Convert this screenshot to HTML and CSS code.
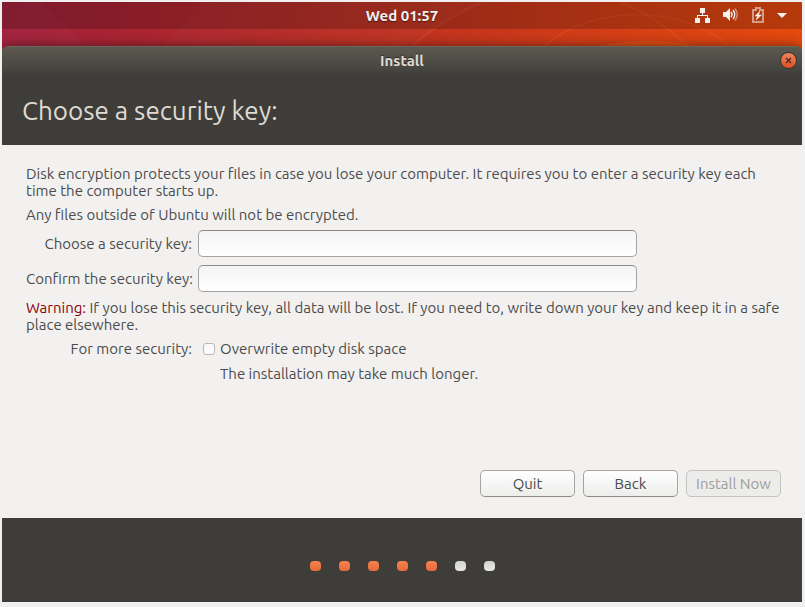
FILE: index.html
```html
<!DOCTYPE html>
<html lang="en">
<head>
    <meta charset="UTF-8">
    <meta name="viewport" content="width=device-width, initial-scale=1.0">
    <title>Install</title>
    <link rel="stylesheet" href="styles.css">
</head>
<body>
<div class="desktop">
    <svg class="wallpaper" viewBox="0 0 800 44" preserveAspectRatio="none" aria-hidden="true">
        <path d="M0 0H40L84 44H0Z" fill="#fff" fill-opacity=".02"/>
        <path d="M200 0L160 44H410Q440 18 480 0Z" fill="#fff" fill-opacity=".02"/>
        <g fill="none" stroke="#ff8040" stroke-opacity=".14" stroke-width="2">
            <path d="M410 44Q440 18 480 0"/>
            <path d="M543 44C590 2 680 2 727 44"/>
            <path d="M618 0Q655 15 686 44"/>
        </g>
        <path d="M596 44Q645 34 695 44Z" fill="#ff8020" fill-opacity=".22"/>
    </svg>

    <header class="top-bar">
        <time class="clock">Wed 01:57</time>
        <div class="indicators">
            <svg width="16" height="16" viewBox="-1 -1 16 16" role="img" aria-label="Network">
                <path d="M5 0h5v5H8v2h5v3h2v5h-5v-5h2V8H3v2h2v5H0v-5h2V7h5V5H5z" fill="#f2f1f0"/>
            </svg>
            <svg width="16" height="16" viewBox="0 0 16 16" role="img" aria-label="Volume">
                <path d="M0 5h3l4-4v13l-4-4H0z" fill="#f2f1f0"/>
                <path d="M8 5q2 2.500 0 5M10 3q3.500 4.500 0 9" fill="none" stroke="#f2f1f0" stroke-width="1.500"/>
                <path d="M12 1.500q4.500 6 0 12" fill="none" stroke="#f2f1f0" stroke-opacity=".45" stroke-width="1.500"/>
            </svg>
            <svg width="12" height="16" viewBox="0 0 12 16" role="img" aria-label="Battery">
                <path d="M4 1h4v2h3v12H1V3h3z" fill="none" stroke="#f2f1f0" stroke-opacity=".55" stroke-width="2"/>
                <path d="M8 4L3 9h2.500L4 13l5.500-5H6.500z" fill="#f2f1f0" stroke="#f2f1f0" stroke-width=".5"/>
            </svg>
            <svg width="10" height="16" viewBox="0 0 10 16" role="img" aria-label="System menu">
                <path d="M0 6h10l-5 5z" fill="#f2f1f0"/>
            </svg>
        </div>
    </header>

    <main class="window">
        <div class="title-bar">
            <span class="title">Install</span>
            <button type="button" class="close" aria-label="Close">
                <svg width="7" height="7" viewBox="0 0 7 7" aria-hidden="true">
                    <path d="M1 1l5 5M6 1L1 6" stroke="#3c2a1c" stroke-width="1.200"/>
                </svg>
            </button>
        </div>
        <h1>Choose a security key:</h1>

        <form class="content">
            <p>Disk encryption protects your files in case you lose your computer. It requires you to enter a security key each time the computer starts up.</p>
            <p>Any files outside of Ubuntu will not be encrypted.</p>
            <div class="fields">
                <label for="key">Choose a security key:</label>
                <input type="password" id="key">
                <label for="confirm">Confirm the security key:</label>
                <input type="password" id="confirm">
            </div>
            <p><span class="warning">Warning:</span> If you lose this security key, all data will be lost. If you need to, write down your key and keep it in a safe place elsewhere.</p>
            <div class="fields">
                <span>For more security:</span>
                <div class="option">
                    <input type="checkbox" id="overwrite" aria-describedby="hint">
                    <label for="overwrite">Overwrite empty disk space</label>
                </div>
                <p class="hint" id="hint">The installation may take much longer.</p>
            </div>
            <div class="actions">
                <button type="button">Quit</button>
                <button type="button">Back</button>
                <button type="submit" disabled>Install Now</button>
            </div>
        </form>

        <footer class="progress">
            <span class="dot done"></span>
            <span class="dot done"></span>
            <span class="dot done"></span>
            <span class="dot done"></span>
            <span class="dot done"></span>
            <span class="dot"></span>
            <span class="dot"></span>
        </footer>
    </main>
</div>
</body>
</html>
```
FILE: styles.css
```css
:root {
    --dark: #3e3d39;
    --light: #f2f1f0;
    --text: #4c4c4c;
    --warning: #900008;
    --border: #a5a4a2;
    --font-family: Ubuntu, 'Noto Sans', 'Open Sans', sans-serif;
}

* {
    box-sizing: border-box;
    margin: 0;
    padding: 0;
}

body {
    font-family: var(--font-family);
    font-size: 15px;
    line-height: 17px;
    color: var(--text);
    background-color: #f0f0f0;
    min-height: 100vh;
    padding: 2px 3px 5px 2px;
    display: flex;
}

.desktop {
    flex: 1;
    display: flex;
    flex-direction: column;
    position: relative;
    overflow: hidden;
    background: linear-gradient(to right, #a1203c, #b42a26 35%, #cc3a1a 67%, #e4490e);
}

.wallpaper {
    position: absolute;
    top: 0;
    left: 0;
    width: 100%;
    height: 44px;
}

.top-bar {
    position: relative;
    display: grid;
    grid-template-columns: 1fr auto 1fr;
    align-items: center;
    height: 27px;
    padding: 0 15px 1px;
    margin-bottom: 17px;
    background-color: rgba(0, 0, 0, 0.2);
    color: #f2f1f0;
}

.clock {
    grid-column: 2;
    font-weight: 700;
    text-shadow: 0 1px 1px rgba(0, 0, 0, 0.5);
}

.indicators {
    display: flex;
    justify-content: flex-end;
    align-items: center;
    gap: 13px;
}

.window {
    position: relative;
    flex: 1;
    display: flex;
    flex-direction: column;
    background-color: var(--dark);
    border-radius: 6px 6px 0 0;
    box-shadow: 0 0 12px rgba(0, 0, 0, 0.5);
}

.title-bar {
    display: grid;
    grid-template-columns: 1fr auto 1fr;
    align-items: center;
    height: 30px;
    padding: 0 5px 2px;
    border-top: 1px solid #6a685e;
    border-radius: 6px 6px 0 0;
    background: linear-gradient(#5c5a50, #3f3e3a);
}

.title {
    grid-column: 2;
    font-weight: 700;
    color: #dfdbd2;
    text-shadow: 0 -1px 0 rgba(0, 0, 0, 0.5);
}

.close {
    display: flex;
    justify-content: center;
    align-items: center;
    justify-self: end;
    width: 17px;
    height: 17px;
    border: 1px solid #35322c;
    border-radius: 50%;
    background: linear-gradient(#f28560, #e14d1c);
}

h1 {
    padding: 17px 20px 16px;
    font-size: 26px;
    line-height: 36px;
    font-weight: 400;
    color: #dfdbd2;
}

.content {
    flex: 1;
    display: flex;
    flex-direction: column;
    gap: 7px;
    padding: 20px 21px 21px 24px;
    background-color: var(--light);
}

.fields {
    display: grid;
    grid-template-columns: 166px minmax(0, 439px);
    gap: 8px 6px;
    align-items: center;
}

.fields > label,
.fields > span {
    text-align: right;
    white-space: nowrap;
}

input[type="password"] {
    width: 100%;
    height: 27px;
    padding: 0 8px;
    font: inherit;
    color: inherit;
    border: 1px solid var(--border);
    border-top-color: #8c8b89;
    border-radius: 5px;
    background: linear-gradient(#f4f4f4, #ffffff);
}

.warning {
    color: var(--warning);
}

.option {
    display: flex;
    align-items: center;
    gap: 5px;
    padding-left: 5px;
}

input[type="checkbox"] {
    appearance: none;
    width: 12px;
    height: 12px;
    border: 1px solid #bab9b7;
    border-radius: 3px;
    background-color: #fafafa;
}

input[type="checkbox"]:checked {
    background-color: #f07746;
}

.hint {
    grid-column: 2;
    padding-left: 22px;
}

.actions {
    display: flex;
    justify-content: flex-end;
    gap: 8px;
    margin-top: auto;
}

.actions button {
    width: 95px;
    height: 27px;
    font: inherit;
    color: var(--text);
    border: 1px solid var(--border);
    border-bottom-color: #8c8b89;
    border-radius: 5px;
    background: linear-gradient(#ffffff, #ededec);
}

.actions button:disabled {
    color: #a09d98;
    border-color: #c4c3c2;
    background: #ececeb;
}

.progress {
    display: flex;
    justify-content: center;
    gap: 18px;
    padding: 43px 0 31px;
}

.dot {
    width: 11px;
    height: 10px;
    border-radius: 4px;
    background: linear-gradient(#d2d2d2, #e8e8e8);
}

.dot.done {
    background: linear-gradient(#f58350, #e66a38);
}
```
